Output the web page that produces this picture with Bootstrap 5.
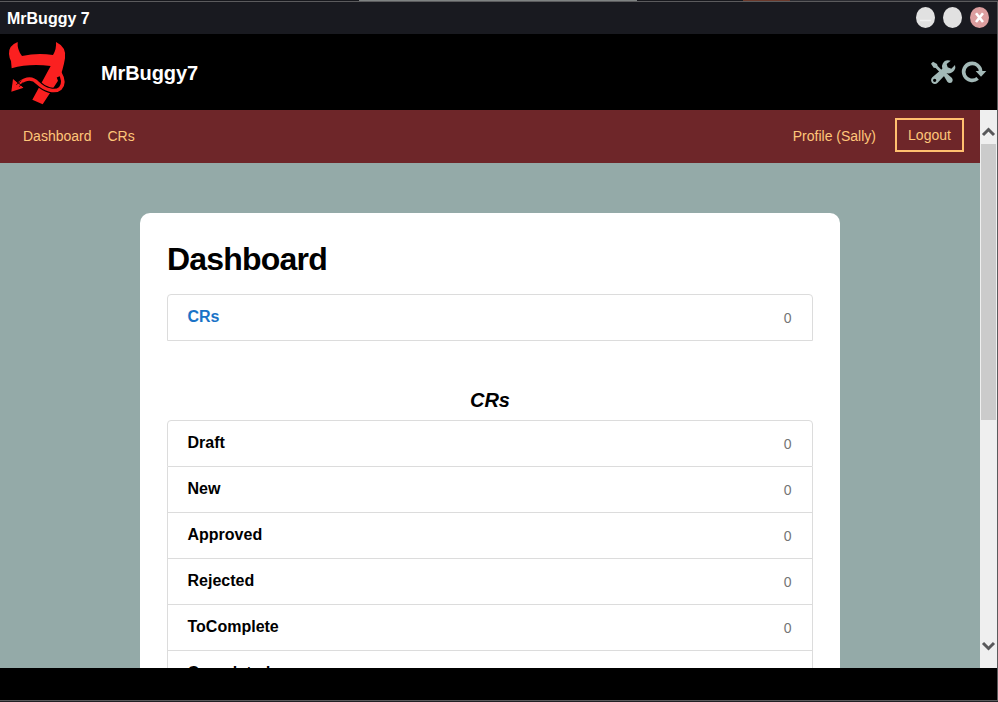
<!DOCTYPE html>
<html lang="en">
<head>
<meta charset="utf-8">
<meta name="viewport" content="width=device-width, initial-scale=1">
<title>MrBuggy 7</title>
<link href="https://cdn.jsdelivr.net/npm/bootstrap@5.3.0/dist/css/bootstrap.min.css" rel="stylesheet">
<style>
body{font-family:"Liberation Sans",Arial,sans-serif;font-size:14px;line-height:20px;color:#000;background:#000;overflow:hidden}
.app-window{height:702px}
.edge-top{height:1px;background:linear-gradient(90deg,#17181d 0 359px,#7e8282 359px 637px,#17181d 637px 743px,#6b3a2c 743px 790px,#2a2b31 790px)}
.frame{border:solid #5b5b5d;border-width:1px 1px 1px 0;min-height:0}
.edge-bottom{height:1px;background:#222226}
.title-strip{height:32px;background:#191a20;padding:0 8px 0 7px}
.title-text{font-size:16px;font-weight:700;padding-top:1px}
.win-controls{padding-bottom:1px}
.win-dot{width:19px;height:21px;border-radius:50%;background:#e1e1e1}
.win-dot.closer{background:#dc9e9f}
.app-head{height:76px;background:#000;padding:0 7px 0 5px}
.brand-name{font-size:20px;font-weight:700;margin-left:32px;padding-top:2px;letter-spacing:-.1px}
.viewport-area{height:558px}
.page-bg{background:#94aaa8;min-width:0}
.main-nav{height:53px;background:#6e2629;padding:0 16px 3px 15px}
.main-nav .nav-link{color:#ffc77a;padding:9px 8px 8px;font-size:14px;line-height:20px}
.btn-logout{--bs-btn-color:#ffc77a;--bs-btn-border-color:#ffc070;--bs-btn-border-width:2px;--bs-btn-border-radius:0;--bs-btn-padding-x:11px;--bs-btn-padding-y:0;--bs-btn-font-size:14px;--bs-btn-line-height:30px;height:34px;width:69px;margin-left:11px}
.panel{width:700px;margin:50px auto 0;padding:27px 27px 0;border:0;border-radius:10px;height:560px;flex:none}
.panel h1{font-size:32px;line-height:38px;font-weight:700;letter-spacing:-.8px;margin:0 0 16px;color:#000}
.panel h2{font-size:20px;line-height:24px;font-weight:700;font-style:italic;margin:47px 0 8px}
.panel .list-group{--bs-list-group-border-color:#dcdcdc;--bs-list-group-border-radius:4px}
.panel .list-group-item{height:46px;padding:0 20.500px 0 19.500px;color:#000}
.panel .list-group-item:first-child{height:47px}
.single-list .list-group-item{border-radius:4px 4px 0 0}
.item-name{font-size:16px;font-weight:700;text-decoration:none;padding-bottom:1px}
.item-link{color:#1a73c7}
.item-count{color:#757575}
.scroll-rail{width:17px;background:#efefef;padding:15px 0 16px 1px}
.scroll-thumb{width:15px;height:276px;background:#cbcbcb;margin-top:7px}
</style>
</head>
<body>
<div class="app-window d-flex flex-column">
  <div class="edge-top"></div>
  <div class="frame flex-grow-1 d-flex flex-column">
    <div class="title-strip d-flex align-items-center justify-content-between text-white">
      <span class="title-text">MrBuggy 7</span>
      <div class="win-controls d-flex gap-2">
        <span class="win-dot d-block"><svg class="d-block" width="19" height="21"><path d="M4 13.500h11" stroke="#f2f2f2" stroke-width="1.500"/></svg></span>
        <span class="win-dot d-block"></span>
        <span class="win-dot closer d-block"><svg class="d-block" width="19" height="21"><path d="M6 6.300l7 8.700M13 6.300l-7 8.700" stroke="#fff" stroke-width="2.600"/></svg></span>
      </div>
    </div>
    <header class="app-head d-flex align-items-center text-white">
      <svg class="mt-1" width="64" height="70" viewBox="0 0 192 210">
        <path d="M38 9Q10 20 12 45Q13 58 18 66L20 88Q72 73 137 81L82 182L113 196L161 122Q174 95 180 58Q185 24 153 9Q155 30 144 48Q98 40 51 51Q36 32 38 9Z" fill="#fb2020"/>
        <path d="M42 136C64 116 82 115 98 132C120 153 146 161 162 149Q174 137 163 112" fill="none" stroke="#000" stroke-width="17"/>
        <path d="M42 134C64 116 82 115 98 132C120 153 150 162 166 148Q182 130 164 100" fill="none" stroke="#fb2020" stroke-width="10.500"/>
        <path d="M24 120L56 146L19 158Z" fill="#fb2020"/>
        <path d="M28 121L57 146M34 137L49 125M43 143L54 130" fill="none" stroke="#000" stroke-width="2.500"/>
      </svg>
      <span class="brand-name">MrBuggy7</span>
      <svg class="ms-auto" width="64" height="34" viewBox="0 0 192 102" fill="#a3b9b7">
        <path d="M15 26L21 20L33 27L35 33L49 47L43 53L29 39L23 38Z"/>
        <path d="M52 60L60 53L78 69Q83 76 78 82Q70 87 64 80Z"/>
        <path fill-rule="evenodd" d="M74 17Q57 12 50 26Q46 33 49 41L19 67Q12 75 18 83Q27 91 35 83L62 55Q78 57 85 46Q90 38 87 30L76 41L65 37L62 27ZM26 71A5 5 0 1 1 26 81A5 5 0 1 1 26 71Z"/>
        <path d="M155 70A25.500 25.500 0 1 1 164 50" fill="none" stroke="#a3b9b7" stroke-width="11"/>
        <path d="M149 48H181L165 65Z"/>
      </svg>
    </header>
    <div class="viewport-area d-flex overflow-hidden">
      <div class="page-bg flex-grow-1 overflow-hidden">
        <nav class="main-nav d-flex align-items-center">
          <a class="nav-link" href="#">Dashboard</a>
          <a class="nav-link" href="#">CRs</a>
          <a class="nav-link ms-auto" href="#">Profile (Sally)</a>
          <button type="button" class="btn btn-logout">Logout</button>
        </nav>
        <main class="card panel">
          <h1>Dashboard</h1>
          <ul class="list-group single-list">
            <li class="list-group-item d-flex justify-content-between align-items-center"><a class="item-name item-link" href="#">CRs</a><span class="item-count">0</span></li>
          </ul>
          <h2 class="text-center">CRs</h2>
          <ul class="list-group">
            <li class="list-group-item d-flex justify-content-between align-items-center"><span class="item-name">Draft</span><span class="item-count">0</span></li>
            <li class="list-group-item d-flex justify-content-between align-items-center"><span class="item-name">New</span><span class="item-count">0</span></li>
            <li class="list-group-item d-flex justify-content-between align-items-center"><span class="item-name">Approved</span><span class="item-count">0</span></li>
            <li class="list-group-item d-flex justify-content-between align-items-center"><span class="item-name">Rejected</span><span class="item-count">0</span></li>
            <li class="list-group-item d-flex justify-content-between align-items-center"><span class="item-name">ToComplete</span><span class="item-count">0</span></li>
            <li class="list-group-item d-flex justify-content-between align-items-center"><span class="item-name">Completed</span><span class="item-count">0</span></li>
          </ul>
        </main>
      </div>
      <div class="scroll-rail d-flex flex-column">
        <svg class="flex-shrink-0" width="15" height="12"><path d="M2 10L7.500 4.500L13 10" fill="none" stroke="#58585a" stroke-width="3"/></svg>
        <div class="scroll-thumb"></div>
        <svg class="mt-auto flex-shrink-0" width="15" height="12"><path d="M2 3L7.500 8.500L13 3" fill="none" stroke="#58585a" stroke-width="3"/></svg>
      </div>
    </div>
  </div>
  <div class="edge-bottom"></div>
</div>
<script src="https://cdn.jsdelivr.net/npm/bootstrap@5.3.0/dist/js/bootstrap.bundle.min.js"></script>
</body>
</html>
